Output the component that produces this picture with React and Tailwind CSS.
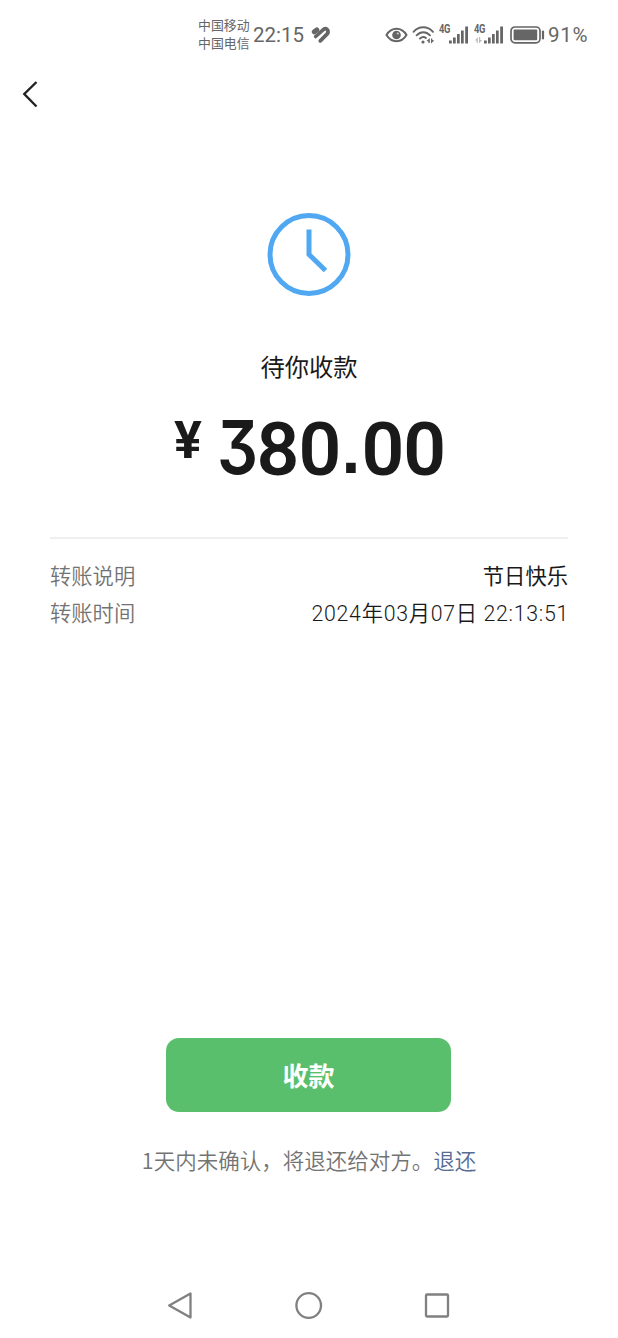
import React from 'react'

const details = [
  { label: '转账说明', value: '节日快乐', valueClass: 'font-normal' },
  {
    label: '转账时间',
    value: '2024年03月07日 22:13:51',
    valueClass: "pt-[3px] -mr-[1px] font-[350] font-['Roboto','Noto_Sans_CJK_SC',sans-serif] tracking-[0.7px]",
  },
]

function HealthIcon() {
  return (
    <svg className="ml-[7px] h-[18px] w-[20px]" viewBox="0 0 20 18" fill="none" stroke="#666" strokeLinecap="round">
      <path d="M3.3 5.8 5.8 4" strokeWidth="5" />
      <path d="M4.7 10.5 12.3 3.7Q14.3 2 16 3.2" strokeWidth="3.6" />
      <path d="M9.3 14.8 16.5 7.6Q17.3 6.2 16.9 4.6" strokeWidth="3.8" />
    </svg>
  )
}

function EyeIcon() {
  return (
    <svg className="h-[16px] w-[23px]" viewBox="0 0 23 16" fill="none" stroke="#666" strokeWidth="2">
      <path d="M1.5 8C4 3.8 7.5 1.8 11.5 1.8S19 3.8 21.5 8C19 12.2 15.5 14.2 11.5 14.2S4 12.2 1.5 8Z" />
      <circle cx="11.5" cy="8" r="4.3" fill="#666" stroke="none" />
      <circle cx="12.8" cy="6.5" r="1.1" fill="#ccc" stroke="none" />
    </svg>
  )
}

function WifiIcon() {
  return (
    <svg className="ml-[4px] h-[20px] w-[23px]" viewBox="0 0 23 20" fill="none" stroke="#666" strokeWidth="1.9" strokeLinecap="round">
      <path d="M1.5 6.8C7 .8 15.5 .8 21 6.8M4.6 10.3C8.6 6.2 14 6.2 18 10.3M8 13.5C10 11.7 12.3 11.7 14 13" />
      <circle cx="11" cy="17" r="1.6" fill="#666" stroke="none" />
      <path d="M17.8 13v5h-1.4v-1.5l-1.9-.5zM19 18.5v-5h1.3v1.5l1.9 .5z" fill="#666" stroke="none" />
    </svg>
  )
}

function Signal({ dim }) {
  return (
    <div className="relative h-[20px] w-[30px]">
      <span className="absolute top-[-1px] left-0 origin-left scale-x-[0.78] font-['Roboto',sans-serif] text-[12px] leading-[11px] font-bold tracking-[-0.6px]">4G</span>
      <svg className="h-[20px] w-[30px]" viewBox="0 0 30 20" fill="#666">
        {dim && <path d="M1 15.5 3.8 12V18H2.6V15.5zM5 12H6.2V15H8L5.5 18H5z" fill="#bbb" />}
        <path d="M10 15.5h2.8v3H10zM14 12.5h2.7v6H14zM18 9h2.7v9.5H18zM22 5.5h2.7v13H22zM26.2 1.5H29v17h-2.8z" />
      </svg>
    </div>
  )
}

function BatteryIcon() {
  return (
    <svg className="ml-[6px] h-[18px] w-[36px]" viewBox="0 0 36 18" fill="none">
      <rect x="1" y="1" width="29" height="15.8" rx="4" stroke="#666" strokeWidth="1.7" />
      <rect x="3.6" y="3.6" width="23.6" height="10.7" rx="1" fill="#666" />
      <path d="M33 5.5v7" stroke="#666" strokeWidth="2.2" strokeLinecap="round" />
    </svg>
  )
}

function StatusBar() {
  return (
    <header className="flex h-[69px] items-center pl-[198px] text-[#666]">
      <div className="-mt-[2px] w-[55px] text-[12.9px] leading-[18px] whitespace-nowrap">
        <div>中国移动</div>
        <div>中国电信</div>
      </div>
      <span className="w-[51px] pt-[1px] font-['Roboto',sans-serif] text-[20.5px] whitespace-nowrap">22:15</span>
      <HealthIcon />
      <div className="ml-[54px] flex items-center">
        <EyeIcon />
        <WifiIcon />
        <div className="ml-[4px] flex gap-[5px]">
          <Signal />
          <Signal dim />
        </div>
        <BatteryIcon />
        <span className="ml-[2px] pt-[1px] font-['Roboto',sans-serif] text-[20.5px] tracking-[0.7px]">91%</span>
      </div>
    </header>
  )
}

function NavigationBar() {
  return (
    <nav className="mt-auto flex h-[66px] items-center justify-center gap-[98px]">
      <svg className="h-[30px] w-[30px]" viewBox="0 0 30 30" fill="none" stroke="#808080" strokeWidth="2.3" strokeLinejoin="round">
        <path d="M3.2 15.5 24.5 3.5V27.5Z" />
      </svg>
      <svg className="h-[30px] w-[30px]" viewBox="0 0 30 30" fill="none" stroke="#808080" strokeWidth="2.3">
        <circle cx="14.7" cy="15.5" r="12.3" />
      </svg>
      <svg className="h-[30px] w-[30px]" viewBox="0 0 30 30" fill="none" stroke="#808080" strokeWidth="2.3">
        <rect x="4" y="4.5" width="22" height="22" rx="1" />
      </svg>
    </nav>
  )
}

function App() {
  return (
    <div className="flex h-[1338px] w-[618px] flex-col overflow-hidden bg-white font-['Noto_Sans_CJK_SC',sans-serif] text-[#1a1a1a]">
      <StatusBar />

      <button className="ml-[16px] h-[50px] w-[28px]" aria-label="返回">
        <svg className="h-[50px] w-[28px]" viewBox="0 0 28 50" fill="none" stroke="#222" strokeWidth="2.4">
          <path d="M20.5 13 8.3 25 20.5 37.5" />
        </svg>
      </button>

      <main className="flex flex-col items-center">
        <svg className="mt-[93px] h-[84px] w-[84px]" viewBox="0 0 84 84" fill="none" stroke="#50a8f2" strokeWidth="5">
          <circle cx="42" cy="42.5" r="39" />
          <path d="M42 17.5V42.5L58.5 58.5" />
        </svg>
        <h1 className="mt-[52px] text-[24.3px] leading-[36px]">待你收款</h1>

        {/* Amount */}
        <div className="mt-[23px] flex h-[80px] w-[276px] font-['Roboto',sans-serif] font-bold">
          <span className="w-[46px] pt-[4px] pl-[3px] text-[52px] leading-[60px]">¥</span>
          <span className="w-[39.5px] origin-left scale-x-[0.87] font-['Inter',sans-serif] text-[74px] leading-[80px] font-semibold [font-feature-settings:'cv09']">3</span>
          <span className="pt-[2px] text-[75px] leading-[80px] font-semibold tracking-[-0.9px]">80</span>
          <span className="w-[21px] pt-[2px] text-center font-['Liberation_Sans',sans-serif] text-[68px] leading-[80px]">.</span>
          <span className="pt-[2px] text-[75px] leading-[80px] font-semibold tracking-[-0.9px]">00</span>
        </div>

        {/* Transfer details */}
        <dl className="mt-[50px] w-[518px] border-t-2 border-[#efefef] pt-[17px] text-[21.3px] font-[350]">
          {details.map((item) => (
            <div key={item.label} className="flex h-[37.5px] items-center justify-between whitespace-nowrap">
              <dt className="text-[#737373]">{item.label}</dt>
              <dd className={item.valueClass}>{item.value}</dd>
            </div>
          ))}
        </dl>

        <button className="mt-[407px] mr-[1px] h-[74px] w-[285px] rounded-[13px] bg-[#5abf6c] pb-[2px] text-[26px] font-bold text-white">
          收款
        </button>
        <p className="mt-[32px] text-[21.5px] leading-[32px] font-[350] whitespace-nowrap text-[#737373]">
          1天内未确认，将退还给对方。<a className="text-[#576b95]">退还</a>
        </p>
      </main>

      <NavigationBar />
    </div>
  )
}

export default App
